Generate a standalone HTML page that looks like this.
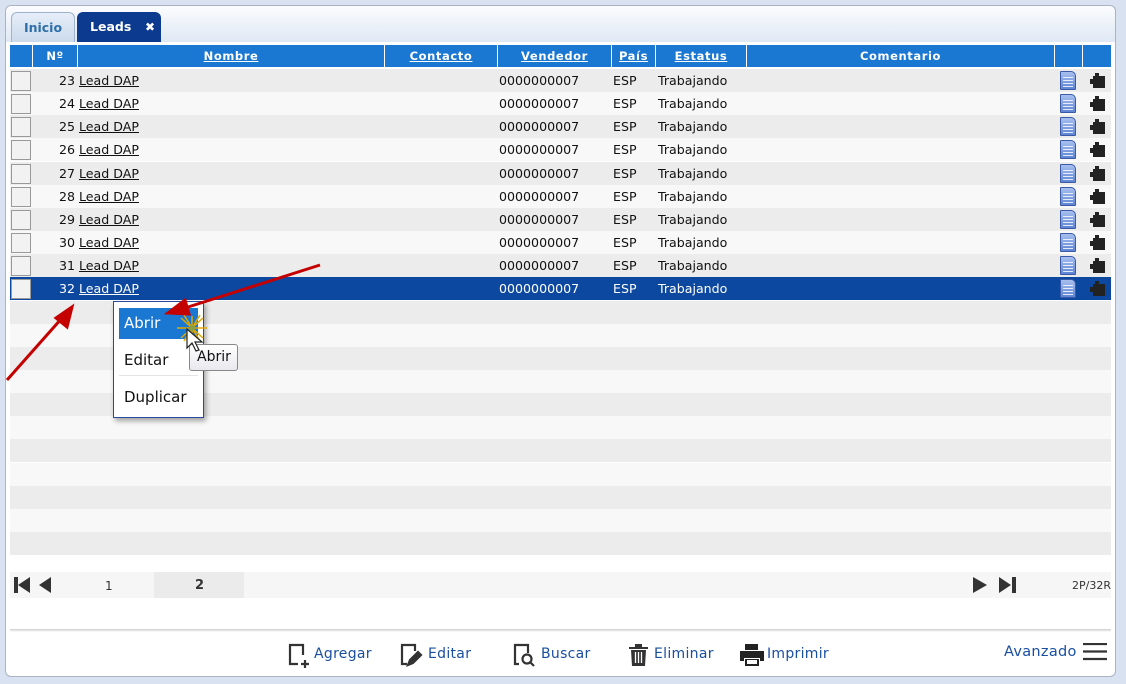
<!DOCTYPE html>
<html><head><meta charset="utf-8"><style>
*{box-sizing:border-box;margin:0;padding:0}
body{width:1126px;height:684px;background:#d9e2f1;font-family:"DejaVu Sans","Liberation Sans",sans-serif;position:relative;overflow:hidden}
.wrap{position:absolute;left:5px;top:5px;width:1111px;height:672px;background:#fff;border:1px solid #a9b3c3;border-radius:6px}
.tabbar{position:absolute;left:0;top:0;width:100%;height:36px;background:linear-gradient(#fbfcfe,#dfe8f4);border-radius:6px 6px 0 0}
.tab{position:absolute;top:6px;height:30px;border-radius:6px 6px 0 0;font-size:12.5px;font-weight:bold;line-height:30px}
.t1{left:5px;width:64px;background:linear-gradient(#e6eef8,#cbdaec);border:1px solid #9fb3cc;border-bottom:none;color:#2e6fa8;text-align:center}
.t2{left:71px;width:84px;background:#0b3a8f;color:#fff;padding-left:13px}
.t2 span{position:absolute;right:6px;font-size:12px}
.abs{position:absolute}
.hd{position:absolute;top:45px;height:22px;background:#1b78d2;color:#fff;font-size:11.5px;font-weight:bold;text-align:center;line-height:22px;letter-spacing:.6px}
.hd u{text-decoration:underline}
.row{position:absolute;left:10px;width:1101px;height:23px;font-size:12.6px;line-height:23px;color:#111}
.row span{position:absolute}
.cb{left:1px;top:2px;width:20px;height:20px;border:1px solid #999;background:#f2f2f2}
.doc{width:16px;height:19px;top:2px;left:1050px;background:linear-gradient(#a8c0ef,#5e84d4);border:1px solid #3a5aa8;border-radius:1px 5px 1px 1px}
.doc:after{content:"";position:absolute;left:2px;right:2px;top:5px;height:10px;background:repeating-linear-gradient(#fff 0 1px,transparent 1px 3px);opacity:.8}
.btn{position:absolute;top:646px;font-size:14px;color:#1a4fa0;letter-spacing:.3px}
</style></head><body>
<div class="wrap">
<div class="tabbar"><div class="tab t1">Inicio</div><div class="tab t2">Leads<span>✖</span></div></div>
</div>
<div class="hd" style="left:10px;width:22px"></div>
<div class="hd" style="left:33px;width:44px">Nº</div>
<div class="hd" style="left:78px;width:306px"><u>Nombre</u></div>
<div class="hd" style="left:385px;width:112px"><u>Contacto</u></div>
<div class="hd" style="left:498px;width:113px"><u>Vendedor</u></div>
<div class="hd" style="left:612px;width:43px"><u>País</u></div>
<div class="hd" style="left:656px;width:90px"><u>Estatus</u></div>
<div class="hd" style="left:747px;width:307px">Comentario</div>
<div class="hd" style="left:1055px;width:27px"></div>
<div class="hd" style="left:1083px;width:28px"></div>
<div id="rows"></div>
<script>
var h='';
for(var i=0;i<21;i++){
 var y=Math.round(69+i*23.15);var n=23+i;var bg=i%2?'#f8f8f8':'#ececec';
 if(i<10){
  var s=i==9;
  h+='<div class="row" style="top:'+y+'px;background:'+(s?'#0d48a0':bg)+';color:'+(s?'#fff':'#111')+'">'+
  '<span class="cb"></span><span style="left:49px">'+n+'</span>'+
  '<span style="left:69px;text-decoration:underline">Lead DAP</span>'+
  '<span style="left:489px">0000000007</span><span style="left:603px">ESP</span><span style="left:648px">Trabajando</span>'+
  '<span class="doc"></span><svg viewBox="0 0 15 15" width="15" height="15" style="position:absolute;left:1080px;top:4px"><path d="M5 0h4v3h6v12H3V11H0V6h3V3h2z" fill="#222"/></svg></div>';
 } else if(y<548){
  h+='<div class="row" style="top:'+y+'px;background:'+bg+'"></div>';
 }
}
document.getElementById('rows').innerHTML=h;
</script>
<div class="abs" style="left:10px;top:572px;width:1101px;height:26px;background:#f6f6f6"></div>
<div class="abs" style="left:154px;top:572px;width:90px;height:26px;background:#ebebeb"></div>
<svg class="abs" style="left:13px;top:576px" width="50" height="18"><path d="M1 1h4v16H1zM5 9l12-8v16z M26 9l12-8v16z" fill="#333"/></svg>
<div class="abs" style="left:105px;top:579px;font-size:12px;color:#333">1</div>
<div class="abs" style="left:195px;top:578px;font-size:13px;color:#333;font-weight:bold">2</div>
<svg class="abs" style="left:972px;top:576px" width="50" height="18"><path d="M1 1l14 8-14 8zM27 1l12 8-12 8zM40 1h4v16h-4z" fill="#333"/></svg>
<div class="abs" style="left:1072px;top:579px;font-size:11px;color:#333">2P/32R</div>
<div class="abs" style="left:10px;top:629px;width:1101px;height:3px;background:linear-gradient(#ccc,#fff)"></div>
<svg class="abs" style="left:287px;top:643px" width="24" height="26" fill="none" stroke="#333" stroke-width="2.2"><path d="M11 21H3V2h13v10M14 21h8M18 17v8"/></svg>
<div class="btn" style="left:314px">Agregar</div>
<svg class="abs" style="left:400px;top:643px" width="24" height="26" fill="none" stroke="#333" stroke-width="2.2"><path d="M7 21H2V2h13v6"/><path d="M8 22l2-5 8-8 3 3-8 8z" fill="#333"/></svg>
<div class="btn" style="left:428px">Editar</div>
<svg class="abs" style="left:513px;top:643px" width="26" height="26" fill="none" stroke="#333" stroke-width="2.2"><path d="M6 21H2V2h13v8"/><circle cx="14" cy="16" r="4.5"/><path d="M17 19l4 4"/></svg>
<div class="btn" style="left:541px">Buscar</div>
<svg class="abs" style="left:628px;top:643px" width="22" height="24"><path d="M1 4h19v2H1zM7 1h7v3H7zM3 7h15l-1 16H4z" fill="#333"/><path d="M7.5 9v11M10.5 9v11M13.5 9v11" stroke="#fff" stroke-width="1.3"/></svg>
<div class="btn" style="left:654px">Eliminar</div>
<svg class="abs" style="left:739px;top:643px" width="26" height="24"><path d="M6 1h13v6H6z M1 8h24v10h-4v-3H5v3H1z M6 16h14v7H6z" fill="#222"/><path d="M8 17h10v4H8z" fill="#fff"/></svg>
<div class="btn" style="left:767px">Imprimir</div>
<div class="btn" style="left:1004px;top:644px;font-size:14.5px">Avanzado</div>
<svg class="abs" style="left:1083px;top:643px" width="24" height="18"><path d="M0 1h24M0 8.5h24M0 16h24" stroke="#333" stroke-width="2.3"/></svg>
<div class="abs" style="left:113px;top:301px;width:91px;height:117px;background:#fff;border:1px solid #2a4a9a;box-shadow:2px 3px 5px rgba(0,0,0,.35)"></div>
<div class="abs" style="left:119px;top:308px;width:79px;height:31px;background:#1b78d2;color:#fff;font-size:15px;line-height:31px;padding-left:5px">Abrir</div>
<div class="abs" style="left:124px;top:351px;font-size:15px;color:#111">Editar</div>
<div class="abs" style="left:119px;top:375px;width:79px;height:1px;background:#e4e4e4"></div>
<div class="abs" style="left:124px;top:388px;font-size:15px;color:#111">Duplicar</div>
<div class="abs" style="left:189px;top:344px;width:49px;height:27px;background:linear-gradient(#fff,#e8e8ee);border:1px solid #888;border-radius:3px;font-size:14px;line-height:25px;padding-left:7px;color:#111">Abrir</div>
<svg class="abs" style="left:172px;top:313px" width="40" height="45">
<g stroke="#e0a800" stroke-width="1.5"><path d="M5 15h30M20 3v24M9 5l22 20M31 5L9 25M12 2l16 26M28 2L12 28"/></g>
<circle cx="20" cy="15" r="3" fill="#8aa040"/>
<path d="M15 16v19l5-5 4 8 3-1-4-8h7z" fill="#fff" stroke="#222" stroke-width="1.2"/>
</svg>
<svg class="abs" style="left:0;top:260px" width="330" height="130">
<g stroke="#c40000" stroke-width="3" fill="#c40000">
<path d="M7 120L62 58"/><path d="M72 47l-5 20-11-9z"/>
<path d="M320 5L185 48"/><path d="M168 53l17-13 4 14z"/>
</g></svg>
</body></html>
